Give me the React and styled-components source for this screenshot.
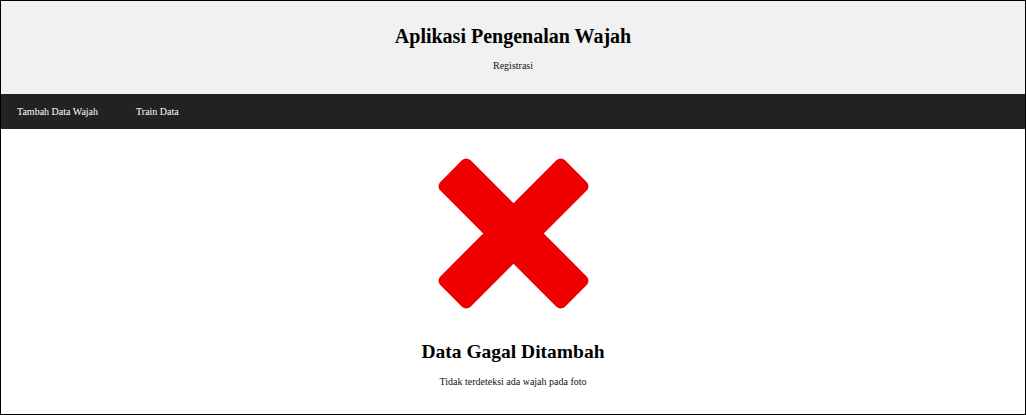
import React from 'react';
import styled, { createGlobalStyle } from 'styled-components';

const Global = createGlobalStyle`
  html, body { margin: 0; padding: 0; background: #fff; }
  body { font-family: "Liberation Serif", "Times New Roman", serif; }
`;

const Frame = styled.div`
  box-sizing: border-box;
  width: 1026px;
  height: 415px;
  border: 1px solid #000;
  overflow: hidden;
  display: flex;
  flex-direction: column;
`;

const Header = styled.header`
  height: 93px;
  background: #f1f1f1;
  display: flex;
  flex-direction: column;
  align-items: center;
  padding-top: 24px;
  box-sizing: border-box;
`;

const Title = styled.h1`
  margin: 0;
  font-size: 20px;
  line-height: 22px;
  font-weight: bold;
  color: #000;
`;

const Sub = styled.p`
  margin: 13px 0 0;
  font-size: 10px;
  line-height: 12px;
  color: #111;
`;

const Nav = styled.nav`
  height: 35px;
  background: #222;
  display: flex;
  align-items: center;
  padding-left: 16px;
  gap: 38px;
`;

const NavLink = styled.a`
  color: #fff;
  font-size: 10px;
  text-decoration: none;
`;

const Main = styled.main`
  display: flex;
  flex-direction: column;
  align-items: center;
  padding-top: 27px;
`;

const Heading = styled.h2`
  margin: 30px 0 0;
  font-size: 19.5px;
  line-height: 22px;
  font-weight: bold;
  color: #000;
`;

const Note = styled.p`
  margin: 13px 0 0;
  font-size: 10px;
  line-height: 12px;
  color: #111;
`;

const CrossIcon = () => (
  <svg width="155" height="155" viewBox="0 0 152 152">
    <rect x="-10.5" y="55" width="173" height="42" rx="6" fill="#ee0000" transform="rotate(45 76 76)" />
    <rect x="-10.5" y="55" width="173" height="42" rx="6" fill="#ee0000" transform="rotate(-45 76 76)" />
  </svg>
);

export default function App() {
  return (
    <>
      <Global />
      <Frame>
        <Header>
          <Title>Aplikasi Pengenalan Wajah</Title>
          <Sub>Registrasi</Sub>
        </Header>
        <Nav>
          <NavLink href="#">Tambah Data Wajah</NavLink>
          <NavLink href="#">Train Data</NavLink>
        </Nav>
        <Main>
          <CrossIcon />
          <Heading>Data Gagal Ditambah</Heading>
          <Note>Tidak terdeteksi ada wajah pada foto</Note>
        </Main>
      </Frame>
    </>
  );
}
